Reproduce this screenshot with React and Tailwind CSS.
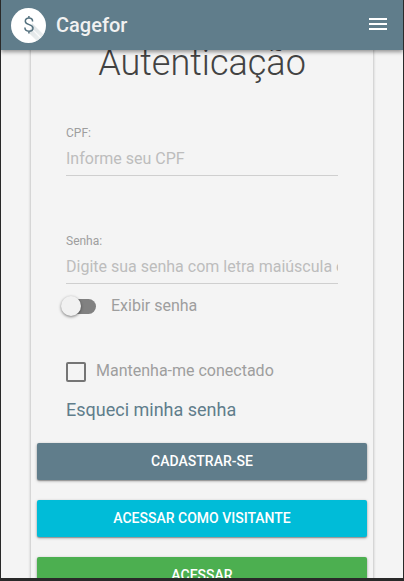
function Logo() {
  return (
    <svg className="h-[35px] w-[35px] shrink-0" viewBox="0 0 35 35">
      <defs>
        <linearGradient id="shade" x1="0" y1="0" x2="1" y2="1">
          <stop offset="0" stopColor="#cdd5d8" />
          <stop offset="1" stopColor="#f1f4f4" />
        </linearGradient>
        <clipPath id="disc"><circle cx="17.5" cy="17.5" r="17.5" /></clipPath>
      </defs>
      <circle cx="17.5" cy="17.5" r="17.5" fill="#fff" />
      <g clipPath="url(#disc)">
        <path d="M21 15L36 30L29 36L17.5 24.5L20 20Z" fill="url(#shade)" opacity="0.75" />
        <path d="M21 21L33 33" stroke="#fff" strokeWidth="1.2" opacity="0.75" />
      </g>
      <path
        d="M21.6 13.4C21.6 11.2 20.1 10.1 17.9 10.1C15.7 10.1 14.3 11.3 14.3 13.2C14.3 17.5 22 15.7 22 20C22 22.1 20.3 23.2 18 23.2C15.5 23.2 13.9 21.9 13.9 19.6M17.9 8V10.1M17.9 23.2V25.4"
        fill="none"
        stroke="#54717f"
        strokeWidth="1.5"
      />
    </svg>
  );
}

function Field({ label, placeholder, className }) {
  return (
    <label className={`flex flex-col ${className}`}>
      <span className="h-4 text-[12px] leading-4 text-[#9e9e9e]">{label}</span>
      <input
        className="h-[35px] w-full border-b border-[#cfcfcf] bg-transparent text-[16px] text-[#424242] outline-none placeholder:text-[#bdbdbd]"
        placeholder={placeholder}
      />
    </label>
  );
}

function Button({ children, className }) {
  return (
    <button
      className={`flex h-[37px] w-full shrink-0 items-center justify-center rounded-[2px] text-[14px] font-medium text-white shadow-[0_1px_3px_rgba(0,0,0,0.35),0_1px_1px_rgba(0,0,0,0.2)] ${className}`}
    >
      {children}
    </button>
  );
}

export default function App() {
  return (
    <div className="flex h-[581px] w-[404px] flex-col overflow-hidden border-x border-b-[3px] border-[#292929] bg-[#f4f4f4] font-['Roboto',sans-serif]">
      <header className="relative z-10 flex h-[50px] shrink-0 items-center bg-[#607d8b] pr-[16px] pl-[10px] shadow-[0_2px_4px_rgba(0,0,0,0.4)]">
        <Logo />
        <span className="ml-[10px] text-[20px] font-medium text-[#f1f1f1]">Cagefor</span>
        <svg className="mb-[2px] ml-auto h-[12px] w-[18px]" viewBox="0 0 18 12" fill="#fff">
          <path d="M0 0H18V2H0ZM0 5H18V7H0ZM0 10H18V12H0Z" />
        </svg>
      </header>
      <main className="mx-[30px] flex min-h-0 flex-1 flex-col">
        <section className="-mt-4 flex h-[560px] shrink-0 flex-col bg-[#f4f4f4] px-[6px] shadow-[0_0_3px_rgba(0,0,0,0.32)]">
          <h1 className="mt-[5px] h-[47px] text-center text-[36px] leading-[48px] font-light text-[#424242]">Autenticação</h1>
          <div className="flex h-[357px] shrink-0 flex-col px-[29px]">
            <Field className="mt-[39px]" label="CPF:" placeholder="Informe seu CPF" />
            <Field className="mt-[57px]" label="Senha:" placeholder="Digite sua senha com letra maiúscula e minúscula" />
            <div className="mt-[10px] flex h-6 items-center">
              <div className="-ml-[5px] flex h-5 w-[35px] items-center">
                <span className="z-[1] h-5 w-5 shrink-0 rounded-full bg-[#f1f1f1] shadow-[0_1px_3px_rgba(0,0,0,0.5)]" />
                <span className="-ml-[15px] h-[15px] w-[30px] shrink-0 rounded-full bg-[#818181]" />
              </div>
              <span className="ml-[15px] text-[16px] leading-6 text-[#9e9e9e]">Exibir senha</span>
            </div>
            <div className="mt-[41px] flex h-6 items-center">
              <span className="mt-[2px] h-5 w-5 rounded-[2px] border-2 border-[#757575]" />
              <span className="ml-[10px] text-[16px] leading-6 text-[#9e9e9e]">Mantenha-me conectado</span>
            </div>
            <a className="mt-[15px] text-[18px] leading-6 text-[#607d8b]">Esqueci minha senha</a>
          </div>
          <div className="flex flex-col gap-5">
            <Button className="bg-[#607d8b]">CADASTRAR-SE</Button>
            <Button className="bg-[#00bcd8]">ACESSAR COMO VISITANTE</Button>
            <Button className="bg-[#4caf50]">ACESSAR</Button>
          </div>
        </section>
      </main>
    </div>
  );
}
